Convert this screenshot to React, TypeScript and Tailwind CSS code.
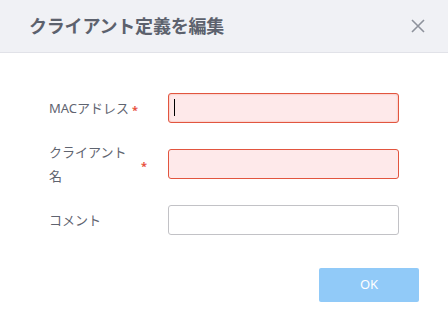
import React from 'react'

const fields = [
    {label: "MACアドレス", required: true, error: true, focused: true},
    {label: "クライアント名", required: true, error: true, focused: false},
    {label: "コメント", required: false, error: false, focused: false},
];

const App = () => {
    return (
        <div className="w-[448px] h-[321px] bg-white text-[13px] text-[#5f6470]"
             style={{fontFamily: '"Noto Sans", "Noto Sans CJK JP", sans-serif'}}>
            {/* header */}
            <div className="h-[53px] bg-[#f0f1f5] border-b border-[#e1e2e8] flex items-center justify-between pl-[29px] pr-[23px]">
                <span className="text-[18px] font-bold text-[#5c616d] tracking-[-0.2px]">クライアント定義を編集</span>
                <svg width="14" height="14" viewBox="0 0 14 14" className="text-[#8e929c]">
                    <path d="M1 1 L13 13 M13 1 L1 13" stroke="currentColor" strokeWidth="1.6" fill="none"/>
                </svg>
            </div>

            {/* form */}
            <div className="px-[49px] pt-[40px] flex flex-col gap-[26px]">
                {fields.map((f, i) => (
                    <div key={i} className="h-[30px] flex items-center">
                        <div className="w-[119px] flex items-center leading-[24px]">
                            <span className="max-w-[89px]">{f.label}</span>
                            {f.required && <span className="ml-[3px] mt-[3px] text-[#e8523f] font-bold text-[11px]">*</span>}
                        </div>
                        <div className="relative flex-1 h-[30px]">
                            <input
                                className={
                                    f.error
                                        ? "w-full h-full rounded-[3px] border border-[#e2553f] bg-[#fee9ea] outline-none " + (f.focused ? "shadow-[inset_0_0_2px_#f0a090]" : "")
                                        : "w-full h-full rounded-[3px] border border-[#c2c2c6] bg-white outline-none"
                                }
                            />
                            {f.focused && <span className="absolute left-[6px] top-[6px] w-[1px] h-[17px] bg-black"/>}
                        </div>
                    </div>
                ))}
            </div>

            {/* footer */}
            <div className="flex justify-end px-[29px] pt-[33px]">
                <button className="w-[100px] h-[34px] rounded-[2px] bg-[#91caf8] text-white text-[13px]">OK</button>
            </div>
        </div>
    )
}
export default App
